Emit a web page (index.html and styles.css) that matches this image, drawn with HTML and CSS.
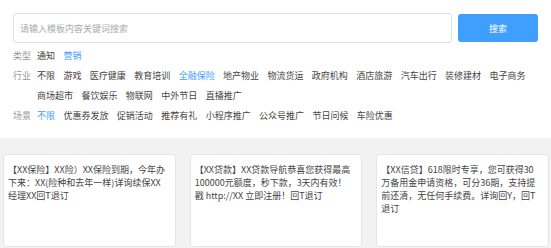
FILE: index.html
```html
<!DOCTYPE html>
<html lang="zh-CN">
<head>
    <meta charset="UTF-8">
    <meta name="viewport" content="width=device-width, initial-scale=1.0">
    <title>模板搜索</title>
    <link rel="stylesheet" href="styles.css">
</head>
<body>
    <div class="search-panel">
        <div class="search-bar">
            <input class="search-input" type="text" placeholder="请输入模板内容关键词搜索">
            <button class="search-btn">搜索</button>
        </div>

        <div class="filters">
            <div class="filter-row">
                <span class="filter-label">类型</span>
                <div class="filter-options">
                    <span class="option">通知</span>
                    <span class="option active">营销</span>
                </div>
            </div>
            <div class="filter-row">
                <span class="filter-label">行业</span>
                <div class="filter-options">
                    <span class="option">不限</span>
                    <span class="option">游戏</span>
                    <span class="option">医疗健康</span>
                    <span class="option">教育培训</span>
                    <span class="option active">全融保险</span>
                    <span class="option">地产物业</span>
                    <span class="option">物流货运</span>
                    <span class="option">政府机构</span>
                    <span class="option">酒店旅游</span>
                    <span class="option">汽车出行</span>
                    <span class="option">装修建材</span>
                    <span class="option">电子商务</span>
                    <span class="option">商场超市</span>
                    <span class="option">餐饮娱乐</span>
                    <span class="option">物联网</span>
                    <span class="option">中外节日</span>
                    <span class="option">直播推广</span>
                </div>
            </div>
            <div class="filter-row">
                <span class="filter-label">场景</span>
                <div class="filter-options">
                    <span class="option active">不限</span>
                    <span class="option">优惠券发放</span>
                    <span class="option">促销活动</span>
                    <span class="option">推荐有礼</span>
                    <span class="option">小程序推广</span>
                    <span class="option">公众号推广</span>
                    <span class="option">节日问候</span>
                    <span class="option">车险优惠</span>
                </div>
            </div>
        </div>
    </div>

    <div class="template-list">
        <div class="template-card">【XX保险】XX险）XX保险到期，今年办<br>下来：XX(险种和去年一样)详询续保XX<br>经理XX回T退订</div>
        <div class="template-card">【XX贷款】XX贷款导航恭喜您获得最高<br>100000元额度，秒下款，3天内有效！<br>戳 http://XX 立即注册！回T退订</div>
        <div class="template-card">【XX信贷】618限时专享，您可获得30<br>万备用金申请资格，可分36期，支持提<br>前还清，无任何手续费。详询回Y，回T<br>退订</div>
    </div>
</body>
</html>
```

FILE: styles.css
```css
* {
    margin: 0;
    padding: 0;
    box-sizing: border-box;
    font-family: "Noto Sans CJK SC", sans-serif;
}

body {
    background: #f2f2f2;
    color: #333;
    font-size: 9px;
}

.search-panel {
    background: white;
    padding: 13px 13px 12px 13px;
}

.search-bar {
    display: flex;
    gap: 6px;
    align-items: center;
}

.search-input {
    flex: 1;
    height: 30px;
    padding: 0 6px;
    border: 1px solid #e1e3e8;
    border-radius: 3px;
    font-size: 9px;
    color: #333;
    outline: none;
}

.search-input::placeholder {
    color: #a8abb2;
}

.search-btn {
    width: 80px;
    height: 28px;
    border: none;
    border-radius: 3px;
    background: #409eff;
    color: white;
    font-size: 9px;
    cursor: pointer;
}

.filters {
    margin-top: 3px;
}

.filter-row {
    display: flex;
    line-height: 20px;
}

.filter-label {
    width: 18px;
    margin-right: 6px;
    color: #999;
    flex-shrink: 0;
}

.filter-options {
    display: flex;
    flex-wrap: wrap;
    column-gap: 8.4px;
}

.option {
    color: #444;
    cursor: pointer;
}

.option.active {
    color: #409eff;
}

.template-list {
    display: grid;
    grid-template-columns: repeat(3, 1fr);
    gap: 14px;
    padding: 16px 2px 0 3px;
}

.template-card {
    height: 93px;
    background: white;
    border: 1px solid #e6e6e6;
    border-radius: 3px;
    padding: 8px 3px 6px 4px;
    line-height: 13px;
    color: #444;
}
```
